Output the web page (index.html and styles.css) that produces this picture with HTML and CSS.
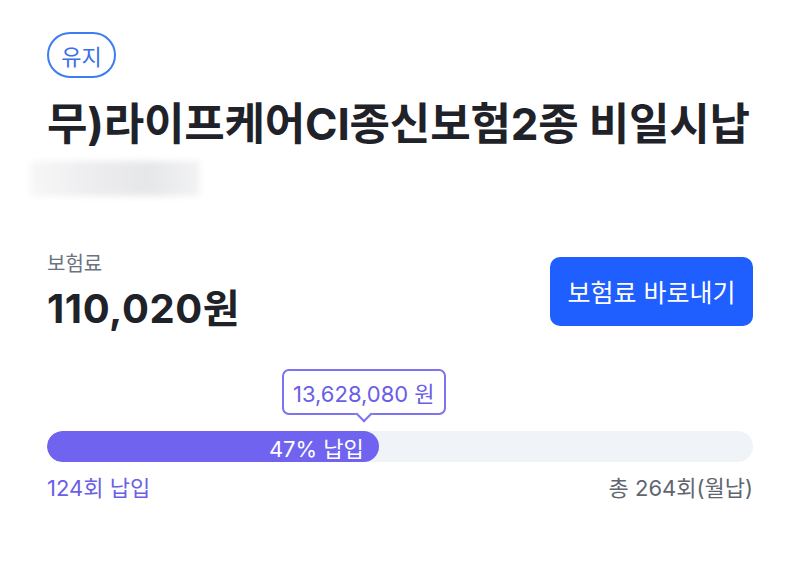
FILE: index.html
```html
<!DOCTYPE html>
<html lang="ko">
<head>
<meta charset="utf-8">
<link rel="stylesheet" href="styles.css">
</head>
<body>
<main class="card">
  <span class="badge">유지</span>
  <h1 class="title">무)라이프케어CI종신보험2종 비일시납</h1>
  <div class="blurred"></div>
  <section class="premium">
    <div class="premium-info">
      <div class="label">보험료</div>
      <div class="amount">110,020원</div>
    </div>
    <button class="pay-btn">보험료 바로내기</button>
  </section>
  <section class="progress">
    <div class="tooltip-row">
      <div class="tooltip" style="left: 235px;">13,628,080 원</div>
    </div>
    <div class="bar">
      <div class="fill" style="width: 47%;"><span>47% 납입</span></div>
    </div>
    <div class="bar-meta">
      <span class="paid">124회 납입</span>
      <span class="total">총 264회(월납)</span>
    </div>
  </section>
</main>
</body>
</html>
```

FILE: styles.css
```css
* { box-sizing: border-box; }
html, body { margin: 0; padding: 0; background: #fff; }
body {
  font-family: "Inter", "Noto Sans CJK KR", sans-serif;
  color: #1f2329;
}
.card {
  padding: 32px 47px 0 47px;
  display: flex;
  flex-direction: column;
}
.badge {
  align-self: flex-start;
  height: 46px;
  width: 69px;
  border: 2px solid #3d7df3;
  border-radius: 23px;
  color: #3a6fe6;
  font-size: 22px;
  display: flex;
  align-items: center;
  justify-content: center;
  font-family: "Noto Sans CJK KR", sans-serif;
}
.title {
  margin: 16px 0 0 0;
  font-size: 44px;
  font-weight: 700;
  line-height: 60px;
  letter-spacing: -0.2px;
  color: #1f2329;
  white-space: nowrap;
}
.blurred {
  margin: 7px 0 0 -17px;
  width: 170px;
  height: 35px;
  background: linear-gradient(90deg, #f7f7f8 0%, #ececee 40%, #e6e7e9 70%, #f3f3f4 100%);
  filter: blur(3px);
}
.premium {
  margin-top: 54px;
  display: flex;
  justify-content: space-between;
  align-items: center;
}
.label {
  font-size: 20px;
  color: #6b7280;
  line-height: 26px;
  font-family: "Noto Sans CJK KR", sans-serif;
}
.amount {
  margin-top: 10px;
  font-size: 40px;
  font-weight: 700;
  line-height: 46px;
  letter-spacing: 0.6px;
  color: #1f2329;
}
.pay-btn {
  width: 203px;
  height: 69px;
  border: none;
  border-radius: 10px;
  background: #1f5eff;
  color: #fff;
  font-size: 25px;
  font-family: "Noto Sans CJK KR", sans-serif;
  padding: 0;
}
.progress {
  margin-top: 37px;
}
.tooltip-row {
  position: relative;
  height: 62px;
}
.tooltip {
  position: absolute;
  top: 0;
  height: 46px;
  padding: 0 9px;
  border: 2px solid #7d73f0;
  border-radius: 7px;
  background: #fff;
  color: #6a5ee8;
  font-size: 22px;
  display: flex;
  align-items: center;
  white-space: nowrap;
}
.tooltip::after {
  content: "";
  position: absolute;
  left: 50%;
  bottom: -7px;
  width: 10px;
  height: 10px;
  margin-left: -6px;
  background: #fff;
  border-right: 2px solid #7d73f0;
  border-bottom: 2px solid #7d73f0;
  transform: rotate(45deg);
}
.bar {
  height: 31px;
  background: #f0f3f8;
  border-radius: 16px;
  overflow: hidden;
}
.fill {
  height: 100%;
  background: #6f63ef;
  border-radius: 16px;
  display: flex;
  align-items: center;
  justify-content: flex-end;
  padding-right: 15px;
  color: #fff;
  font-size: 22px;
}
.bar-meta {
  margin-top: 11px;
  display: flex;
  justify-content: space-between;
  font-size: 22px;
  line-height: 30px;
}
.paid { color: #6b5fe6; }
.total { color: #5f6670; }
```
